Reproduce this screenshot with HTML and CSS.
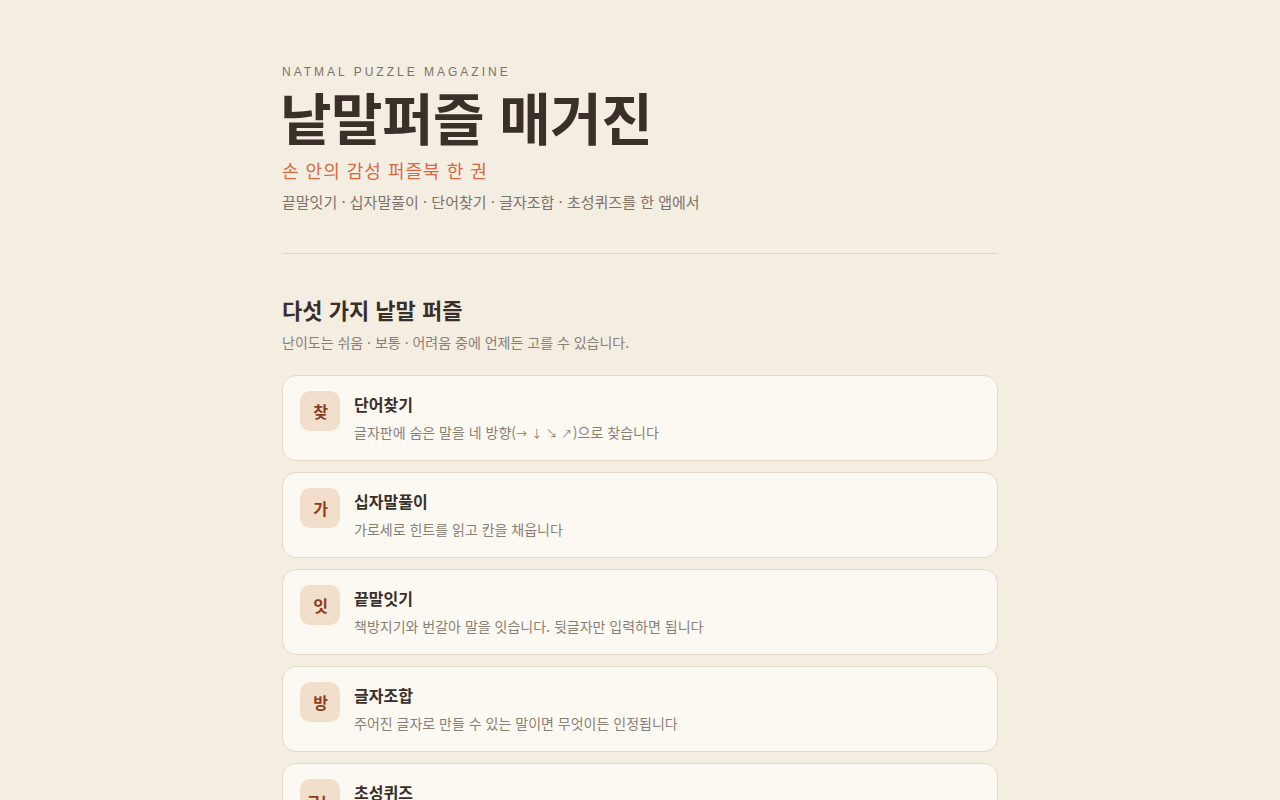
FILE: index.html
```html
<!DOCTYPE html>
<html lang="ko">
<head>
<meta charset="utf-8">
<title>낱말퍼즐 매거진</title>
<link rel="stylesheet" href="styles.css">
</head>
<body>
<main class="page">
  <header class="hero">
    <p class="eyebrow">NATMAL PUZZLE MAGAZINE</p>
    <h1 class="title">낱말퍼즐 매거진</h1>
    <p class="tagline">손 안의 감성 퍼즐북 한 권</p>
    <p class="summary">끝말잇기 · 십자말풀이 · 단어찾기 · 글자조합 · 초성퀴즈를 한 앱에서</p>
  </header>
  <hr class="divider">
  <section class="games">
    <h2 class="section-title">다섯 가지 낱말 퍼즐</h2>
    <p class="section-sub">난이도는 쉬움 · 보통 · 어려움 중에 언제든 고를 수 있습니다.</p>
    <ul class="cards">
      <li class="card">
        <span class="badge">찾</span>
        <div class="card-body">
          <h3 class="card-title">단어찾기</h3>
          <p class="card-desc">글자판에 숨은 말을 네 방향(<span class="arrows">→ ↓ ↘ ↗</span>)으로 찾습니다</p>
        </div>
      </li>
      <li class="card">
        <span class="badge">가</span>
        <div class="card-body">
          <h3 class="card-title">십자말풀이</h3>
          <p class="card-desc">가로세로 힌트를 읽고 칸을 채웁니다</p>
        </div>
      </li>
      <li class="card">
        <span class="badge">잇</span>
        <div class="card-body">
          <h3 class="card-title">끝말잇기</h3>
          <p class="card-desc">책방지기와 번갈아 말을 잇습니다. 뒷글자만 입력하면 됩니다</p>
        </div>
      </li>
      <li class="card">
        <span class="badge">방</span>
        <div class="card-body">
          <h3 class="card-title">글자조합</h3>
          <p class="card-desc">주어진 글자로 만들 수 있는 말이면 무엇이든 인정됩니다</p>
        </div>
      </li>
      <li class="card">
        <span class="badge">ㄱㄴ</span>
        <div class="card-body">
          <h3 class="card-title">초성퀴즈</h3>
          <p class="card-desc">초성만 보고 낱말을 맞힙니다</p>
        </div>
      </li>
    </ul>
  </section>
</main>
</body>
</html>
```
FILE: styles.css
```css
* { box-sizing: border-box; }
html, body { margin: 0; padding: 0; }
body {
  background: #f4ede1;
  font-family: "Noto Sans CJK KR", "Noto Sans", "Liberation Sans", sans-serif;
  color: #3a2f28;
}
.page {
  width: 716px;
  margin: 0 auto;
  padding-top: 63px;
}
.hero { display: flex; flex-direction: column; }
.eyebrow {
  margin: 0;
  font-family: "Liberation Sans", Arial, sans-serif;
  font-size: 12px;
  letter-spacing: 3px;
  color: #7d7268;
  line-height: 18px;
}
.title {
  margin: 2px 0 0 -2px;
  font-size: 56px;
  font-weight: 700;
  line-height: 66px;
  letter-spacing: -0.5px;
  color: #3b3029;
}
.tagline {
  margin: 8px 0 0;
  font-size: 18px;
  line-height: 26px;
  color: #d56a42;
  letter-spacing: 1px;
}
.summary {
  margin: 8px 0 0;
  font-size: 15px;
  line-height: 22px;
  color: #7d7268;
}
.divider {
  border: 0;
  border-top: 1px solid #e0d6c8;
  margin: 40px 0 0;
}
.games { padding-top: 40px; }
.section-title {
  margin: 0;
  font-size: 22px;
  font-weight: 700;
  line-height: 30px;
  color: #3a2f28;
}
.section-sub {
  margin: 8px 0 0;
  font-size: 14px;
  line-height: 20px;
  color: #8a7f75;
}
.cards {
  list-style: none;
  margin: 23px 0 0;
  padding: 0;
  display: flex;
  flex-direction: column;
  gap: 11px;
}
.card {
  display: flex;
  align-items: flex-start;
  gap: 14px;
  height: 86px;
  padding: 15px 17px;
  background: #fcf9f3;
  border: 1px solid #e3d9ca;
  border-radius: 14px;
}
.badge {
  flex: 0 0 40px;
  width: 40px;
  height: 40px;
  border-radius: 10px;
  background: #f2dfcb;
  color: #8c3d1f;
  font-weight: 700;
  font-size: 16px;
  display: flex;
  align-items: center;
  justify-content: center;
  letter-spacing: -1px;
}
.card-body { display: flex; flex-direction: column; }
.card-title {
  margin: 1px 0 0;
  font-size: 16px;
  font-weight: 700;
  line-height: 24px;
  color: #3a2f28;
}
.card-desc {
  margin: 6px 0 0;
  font-size: 14px;
  line-height: 20px;
  color: #8a7f75;
}
.arrows {
  font-size: 11px;
  letter-spacing: 0.5px;
}
```
